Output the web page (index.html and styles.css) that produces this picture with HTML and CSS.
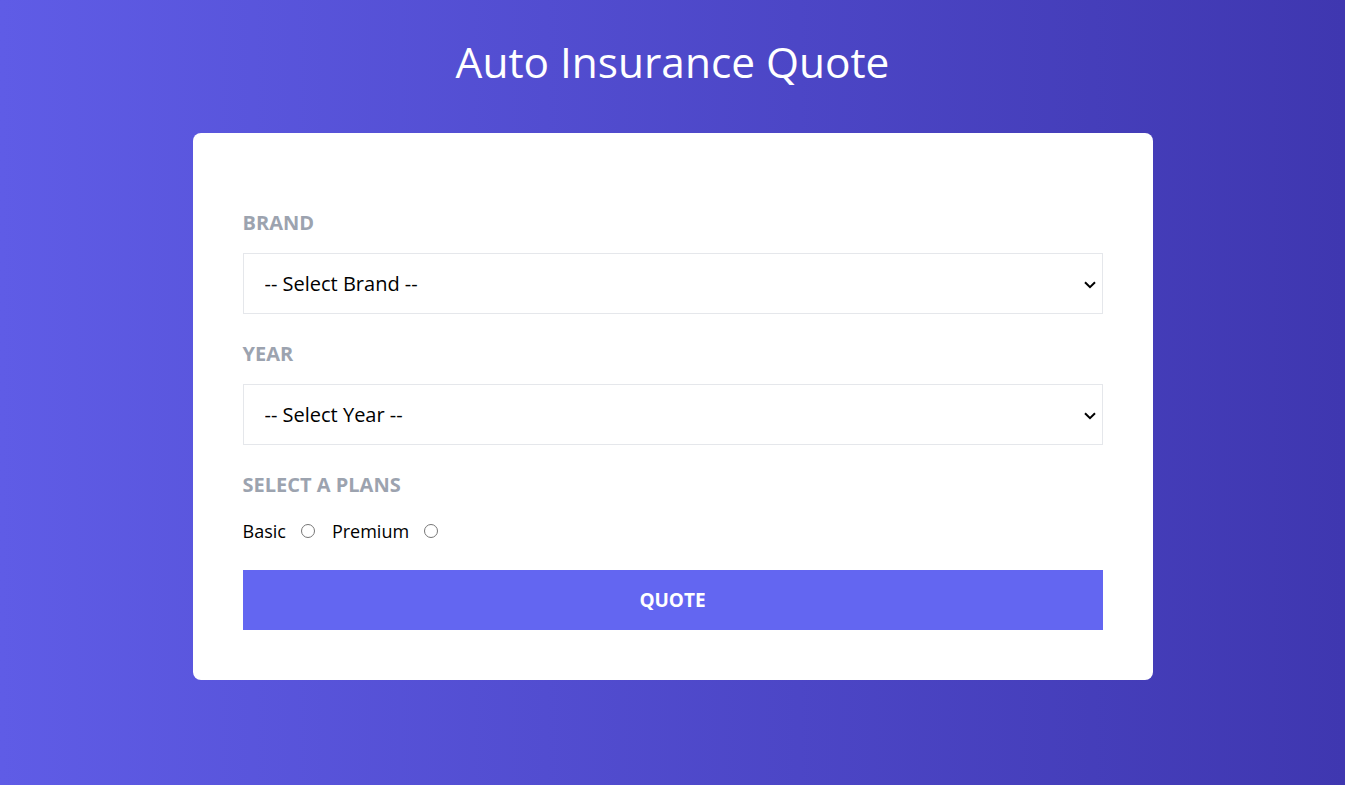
FILE: index.html
```html
<!DOCTYPE html>
<html lang="en">
<head>
<meta charset="utf-8">
<title>Auto Insurance Quote</title>
<link rel="stylesheet" href="styles.css">
</head>
<body>
<header class="header">
  <h1 class="title">Auto Insurance Quote</h1>
</header>
<main class="card">
  <form class="form">
    <div class="field">
      <label class="label" for="brand">Brand</label>
      <div class="select-wrap">
        <select class="select" id="brand">
          <option>-- Select Brand --</option>
          <option>American</option>
          <option>European</option>
          <option>Asian</option>
        </select>
        <svg class="chevron" width="12" height="8" viewBox="0 0 12 8" aria-hidden="true"><path d="M1 1.2 L6 6.2 L11 1.2" fill="none" stroke="#000" stroke-width="2"/></svg>
      </div>
    </div>
    <div class="field">
      <label class="label" for="year">Year</label>
      <div class="select-wrap">
        <select class="select" id="year">
          <option>-- Select Year --</option>
        </select>
        <svg class="chevron" width="12" height="8" viewBox="0 0 12 8" aria-hidden="true"><path d="M1 1.2 L6 6.2 L11 1.2" fill="none" stroke="#000" stroke-width="2"/></svg>
      </div>
    </div>
    <div class="field field-plans">
      <span class="label">Select a plans</span>
      <div class="plans">
        <label class="plan" for="basic">Basic</label>
        <input class="radio" type="radio" name="plan" id="basic">
        <label class="plan" for="premium">Premium</label>
        <input class="radio" type="radio" name="plan" id="premium">
      </div>
    </div>
    <button type="button" class="button">Quote</button>
  </form>
</main>
</body>
</html>
```

FILE: styles.css
```css
* { box-sizing: border-box; }
html, body { height: 100%; }
body {
  margin: 0;
  font-family: "Open Sans", "Noto Sans", sans-serif;
  background: linear-gradient(to right, #5f5ce6, #3f37b0);
  color: #000;
}
.header {
  padding-top: 30px;
  padding-bottom: 39px;
}
.title {
  margin: 0;
  text-align: center;
  color: #fff;
  font-weight: 400;
  font-size: 42.4px;
  line-height: 64px;
}
.card {
  width: 960px;
  margin: 0 auto;
  background: #fff;
  border-radius: 8px;
  padding: 77px 50px 50px;
}
.form {
  display: flex;
  flex-direction: column;
}
.field {
  display: flex;
  flex-direction: column;
  margin-bottom: 27px;
}
.field-plans { margin-bottom: 25px; }
.label {
  display: block;
  text-transform: uppercase;
  font-weight: 700;
  color: #9ca3af;
  font-size: 20px;
  line-height: 26px;
  margin-bottom: 17px;
}
.select-wrap {
  position: relative;
}
.select {
  display: block;
  width: 100%;
  height: 61px;
  padding: 0 40px 0 21px;
  border: 1px solid #e5e7eb;
  background: #fff;
  font-family: inherit;
  font-size: 20px;
  color: #000;
  border-radius: 0;
  appearance: none;
  -webkit-appearance: none;
}
.chevron {
  position: absolute;
  right: 7px;
  top: 50%;
  margin-top: -3px;
  pointer-events: none;
}
.plans {
  display: flex;
  align-items: center;
  font-size: 18px;
  margin-top: 2px;
}
.plan { line-height: 28px; }
.radio {
  margin: 0 17px 0 15px;
  width: 14px;
  height: 14px;
}
.button {
  width: 100%;
  height: 60px;
  border: 0;
  background: #6366f1;
  color: #fff;
  font-family: inherit;
  font-weight: 700;
  font-size: 19px;
  text-transform: uppercase;
}
```
